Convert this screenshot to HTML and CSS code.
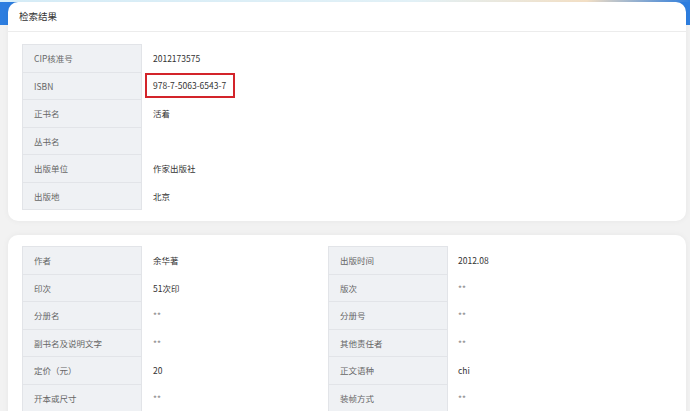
FILE: index.html
```html
<!DOCTYPE html>
<html lang="zh">
<head>
<meta charset="utf-8">
<title>检索结果</title>
<link rel="stylesheet" href="styles.css">
</head>
<body>
<div class="page">
  <section class="card card-top">
    <div class="card-head">检索结果</div>
    <div class="card-body">
      <table class="info">
        <colgroup><col class="c-lbl"><col></colgroup>
        <tr><td class="lbl">CIP核准号</td><td class="val">2012173575</td></tr>
        <tr><td class="lbl">ISBN</td><td class="val val-hl"><span class="hl">978-7-5063-6543-7</span></td></tr>
        <tr><td class="lbl">正书名</td><td class="val">活着</td></tr>
        <tr><td class="lbl">丛书名</td><td class="val"></td></tr>
        <tr><td class="lbl">出版单位</td><td class="val">作家出版社</td></tr>
        <tr><td class="lbl">出版地</td><td class="val">北京</td></tr>
      </table>
    </div>
  </section>
  <section class="card card-bottom">
    <div class="card-body">
      <table class="info">
        <colgroup><col class="c-lbl"><col class="c-v1"><col class="c-lbl"><col></colgroup>
        <tr><td class="lbl">作者</td><td class="val">余华著</td><td class="lbl">出版时间</td><td class="val v2">2012.08</td></tr>
        <tr><td class="lbl">印次</td><td class="val">51次印</td><td class="lbl">版次</td><td class="val v2 star">**</td></tr>
        <tr><td class="lbl">分册名</td><td class="val star">**</td><td class="lbl">分册号</td><td class="val v2 star">**</td></tr>
        <tr><td class="lbl">副书名及说明文字</td><td class="val star">**</td><td class="lbl">其他责任者</td><td class="val v2 star">**</td></tr>
        <tr><td class="lbl">定价（元）</td><td class="val">20</td><td class="lbl">正文语种</td><td class="val v2">chi</td></tr>
        <tr><td class="lbl">开本或尺寸</td><td class="val star">**</td><td class="lbl">装帧方式</td><td class="val v2 star">**</td></tr>
      </table>
    </div>
  </section>
</div>
</body>
</html>
```

FILE: styles.css
```css
html, body {
  margin: 0;
  padding: 0;
}
body {
  background:
    linear-gradient(to right, #d9f0fb 0%, #e6f5fb 60%, #f7e3c8 85%, #2f7fe0 100%) top / 100% 2px no-repeat,
    linear-gradient(to bottom, #2d7ee0 0, #2d7ee0 25px, #f2f2f2 25px) top / 100% 100% no-repeat;
  background-color: #f2f2f2;
  font-family: "Noto Sans CJK SC", "Noto Sans", sans-serif;
  font-size: 8.5px;
  color: #333;
  height: 411px;
  overflow: hidden;
}
.page {
  padding: 2px 4px 0 8px;
  display: flex;
  flex-direction: column;
  gap: 14px;
}
.card {
  background: #fff;
  border-radius: 10px;
  box-shadow: 0 0 6px rgba(0, 0, 0, 0.05);
}
.card-head {
  height: 29px;
  line-height: 29px;
  padding-left: 11px;
  font-size: 9.5px;
  color: #333;
  border-bottom: 1px solid #ececec;
}
.card-top .card-body {
  padding: 12px 14px 11px 14px;
}
.card-bottom .card-body {
  padding: 11px 14px 20px 14px;
}
.info {
  width: 100%;
  border-collapse: collapse;
  table-layout: fixed;
}
.c-lbl {
  width: 119px;
}
.c-v1 {
  width: 187px;
}
.info tr {
  height: 27.5px;
}
.info td {
  padding: 0;
  vertical-align: middle;
  white-space: nowrap;
}
.lbl {
  background: #eff1f4;
  border: 1px solid #e2e4e8;
  padding-left: 11px !important;
  color: #666;
}
.val {
  padding-left: 11px !important;
  color: #333;
}
.v2 {
  padding-left: 10px !important;
}
.star {
  color: #888;
}
.val-hl {
  padding-left: 3px !important;
}
.hl {
  display: inline-block;
  box-sizing: border-box;
  width: 90px;
  height: 25px;
  line-height: 21px;
  padding-left: 6px;
  border: 2px solid #d3242a;
  color: #333;
}
```
